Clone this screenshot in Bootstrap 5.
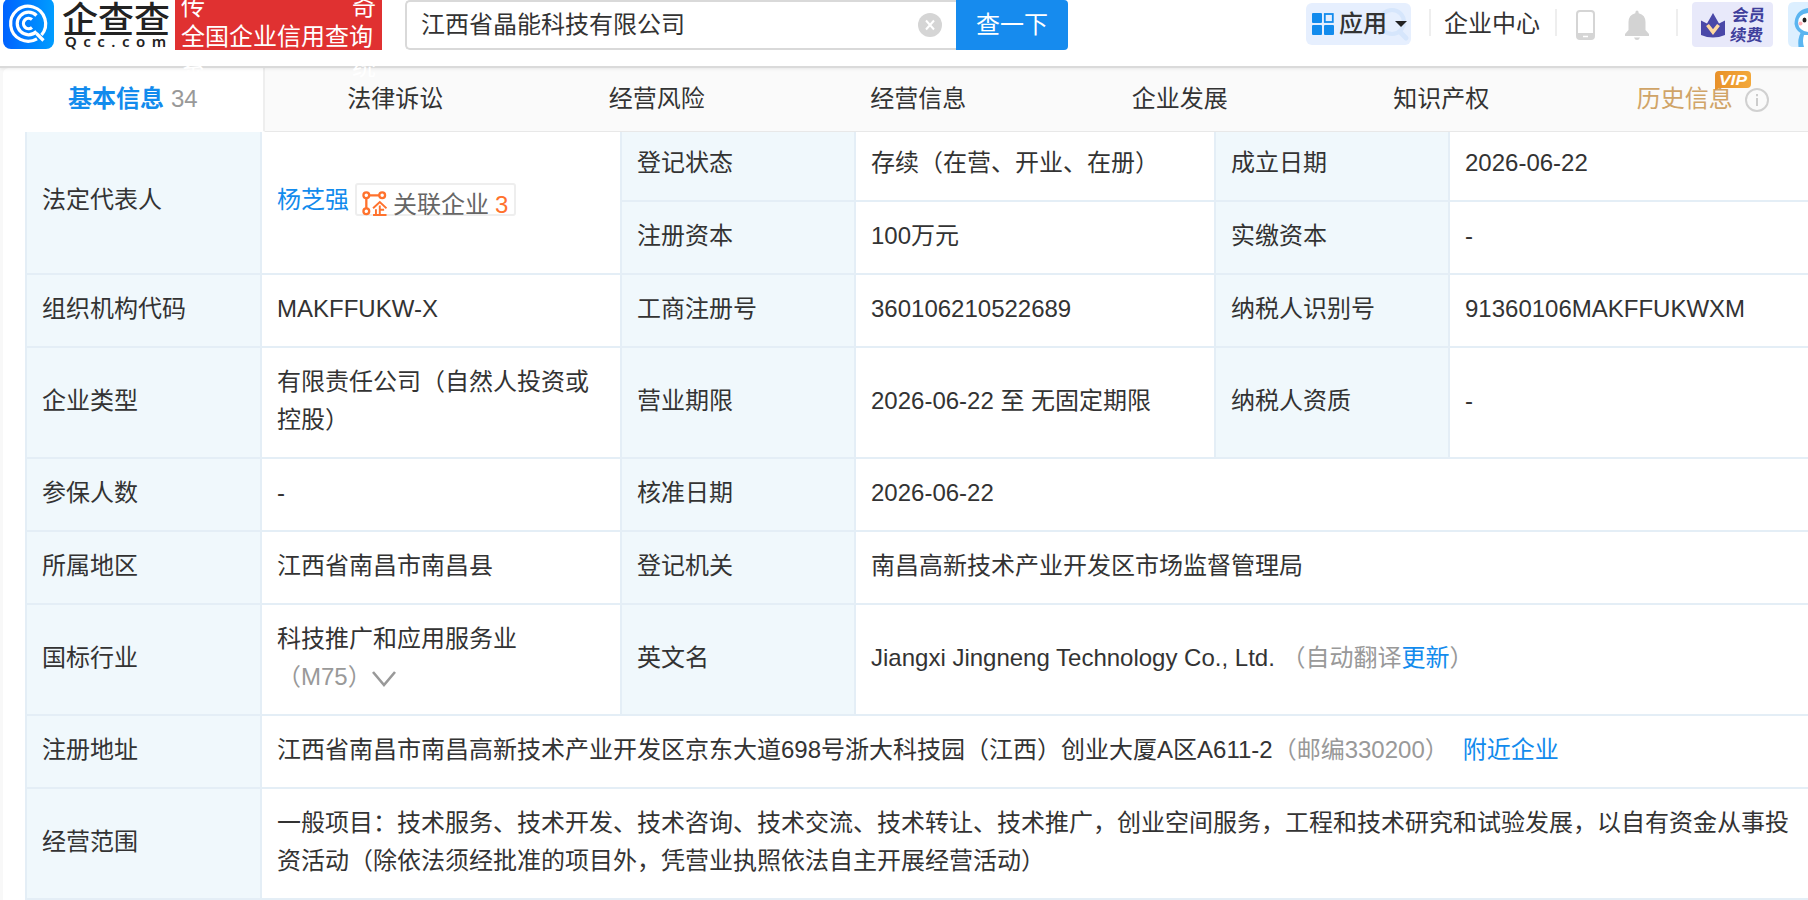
<!DOCTYPE html>
<html lang="zh-CN">
<head>
<meta charset="utf-8">
<meta name="viewport" content="width=device-width, initial-scale=1">
<title>企查查 - 江西省晶能科技有限公司</title>
<link href="https://cdn.jsdelivr.net/npm/bootstrap@5.3.0/dist/css/bootstrap.min.css" rel="stylesheet">
<style>
body{font-family:"Liberation Sans","Noto Sans CJK SC",sans-serif;font-size:24px;line-height:38px;color:#333;background:#f8f8f8;overflow:hidden;height:900px}
a{color:#128bed;text-decoration:none}
svg{display:block;flex:none}
.topbar{height:68px;border-bottom:2px solid #dadada;padding-left:3px;position:relative;z-index:3;box-shadow:0 1px 3px rgba(0,0,0,.08)}
.brand-name{width:106px;margin-left:8px}
.brand-cn{font-family:"Noto Sans CJK SC",sans-serif;font-weight:500;font-size:36px;line-height:34px;height:34px;color:#222;white-space:nowrap}
.brand-en{font-family:"Noto Sans",sans-serif;font-weight:600;font-size:15px;line-height:14px;letter-spacing:6.5px;color:#222;padding-left:3px;white-space:nowrap}
.slogan{width:207px;height:50px;margin-left:7px;padding:0 6px;background:#e03131;color:#fff;line-height:30px}
.slogan-in{margin-top:-8px}
.search{width:551px;height:50px;margin-left:23px;border:2px solid #d9d9d9;border-right:0;border-radius:5px 0 0 5px;padding:0 14px 0 14px}
.search-btn{width:112px;height:50px;background:#168bee;color:#fff;border-radius:0 4px 4px 0;font-size:24px;padding:0;line-height:48px;border:0}
.app-pill{width:105px;height:42px;margin:3px 0 0 238px;padding-left:6px;background:#e6effe;border-radius:6px;position:relative}
.app-pill b{font-weight:500;margin-left:5px;z-index:1}
.lens{position:absolute;right:1px;top:4px}
.caret{border:6px solid transparent;border-top-color:#222;border-bottom:0;margin-left:8px;z-index:1}
.rule{width:2px;height:27px;margin-top:9px;background:#eee}
.rule.first{margin-left:18px}
.rule.second{margin-left:15px}
.rule.third{margin-left:27px}
.center-link{margin:5px 0 0 13px}
.phone{margin:10px 0 0 19px}
.bell{margin:10px 0 0 30px}
.member{width:81px;height:45px;margin:2px 0 0 14px;padding:3px 0 0 9px;background:#e8e9fa;border-radius:4px}
.member b{font-size:16.5px;line-height:20px;color:#3f3f9c;margin-left:6px;transform:skewX(-6deg)}
.mascot{margin:2px 0 0 15px}
.tabs{height:64px;margin-left:3px;width:1831px;position:relative;z-index:2}
.tab-item{width:261.5px;height:64px;background:#fafafa;border-bottom:1px solid #e8e8e8;flex:none;padding-bottom:2px}
.tab-item.on{background:#fff;border-right:2px solid #eee;border-bottom-color:#fff;border-radius:6px 0 0 0}
.tab-item.on b{color:#128bed;font-weight:700}
.tab-item.on span{margin-left:7px}
.hist{color:#d0a467;position:relative}
.vip{position:absolute;left:78px;top:-9px}
.info-dot{margin-left:12px;margin-top:3px}
.panel{margin-left:3px;margin-top:-3px;padding-left:22px;background:#fff;width:1831px}
.info{width:1785px;table-layout:fixed;border-collapse:separate;border-spacing:0}
.info td,.info th{font-weight:400;border:solid #e4eef6;border-width:0 2px 2px 0;padding:0 15px 3px;height:73px;vertical-align:middle;text-align:left}
.info th{background:#f0f8fc}
.info tr>.edge{border-left-width:2px}
.info .tall>*{height:111px}
.c1,.c3,.c5{width:234px}
.c1{width:237px}
.c2{width:360px}
.grey{color:#999}
.tag-rel{height:33px;border:2px solid #eee;border-radius:3px;padding:0 6px 0 5px;margin-left:6px;color:#666;line-height:39px}
.tag-rel svg{margin-top:6px}
.tag-rel span{margin-left:6px}
.tag-rel i{font-style:normal;color:#ff722d;margin-left:6px}
.more{margin-left:-1px}
.near{margin-left:14px}
</style>
</head>
<body>
<header class="topbar bg-white d-flex align-items-start">
  <svg width="51" height="49" viewBox="0 0 51 49"><defs><linearGradient id="lg"><stop stop-color="#0062ff"/><stop offset="1" stop-color="#009dff"/></linearGradient></defs><rect y="-2" width="51" height="51" rx="8" fill="url(#lg)"/><g fill="none" stroke="#fff" stroke-width="3.2"><path d="M38.500 35A17.500 17.500 0 1 0 34 38.800M33.500 33.500L40.500 40.500"/><path d="M33.500 15.500A11.300 11.300 0 1 0 33.500 31.500"/><path d="M29 19.500A5.200 5.200 0 1 0 29 27.500"/></g></svg>
  <div class="brand-name"><div class="brand-cn">企查查</div><div class="brand-en">Qcc.com</div></div>
  <div class="slogan"><div class="slogan-in">
    <div class="d-flex justify-content-between"><span>传</span><span>奇</span></div>
    <div class="text-nowrap">全国企业信用查询</div>
    <div class="d-flex justify-content-between"><span>系</span><span>统</span></div>
  </div></div>
  <div class="search d-flex align-items-center justify-content-between bg-white"><span>江西省晶能科技有限公司</span>
    <svg width="24" height="24" viewBox="0 0 24 24"><circle cx="12" cy="12" r="12" fill="#d5d5d5"/><path d="M8 7.500l8 9M16 7.500l-8 9" stroke="#fff" stroke-width="2"/></svg></div>
  <button class="btn search-btn">查一下</button>
  <div class="app-pill d-flex align-items-center">
    <svg class="lens" width="34" height="36" viewBox="0 0 34 36" fill="none" stroke="#d6e6fc" stroke-width="4"><circle cx="16" cy="15" r="12"/><path d="M24 25l6 6" stroke-width="5" stroke-linecap="round"/></svg>
    <svg width="22" height="22" viewBox="0 0 22 22" fill="#128bed"><rect width="10" height="10" rx="1"/><rect x="12.800" y="1" width="8" height="8" fill="none" stroke="#128bed" stroke-width="1.800"/><rect y="12" width="10" height="10" rx="1"/><rect x="12" y="12" width="10" height="10" rx="1"/></svg>
    <b>应用</b><span class="caret"></span></div>
  <span class="rule first"></span>
  <span class="text-nowrap center-link">企业中心</span>
  <span class="rule second"></span>
  <svg class="phone" width="19" height="30" viewBox="0 0 19 30"><rect x="1" y="1" width="17" height="28" rx="3" fill="none" stroke="#d5d5d5" stroke-width="2"/><path d="M1 23h17v4q0 2-2 2H3q-2 0-2-2z" fill="#d5d5d5"/><path d="M7 26.500h5" stroke="#fff" stroke-width="1.500"/></svg>
  <svg class="bell" width="24" height="30" viewBox="0 0 24 30" fill="#d3d3d3"><path d="M10.500 2a1.500 1.500 0 0 1 3 0l.2 1.200Q20.500 5 20.500 12v8l3.500 4v2H0v-2l3.500-4v-8q0-7 6.800-8.800zM9 27.500h6q-1 2.500-3 2.500t-3-2.500z"/></svg>
  <span class="rule third"></span>
  <div class="member d-flex">
    <svg class="mt-2" width="24" height="25" viewBox="0 0 24 25"><path d="M0 7.500l6 3L12 0l6 10.500 6-3V22q-12 5-24 0z" fill="#4a48a8"/><path d="M6.500 12l5.500 7 5.500-7" fill="none" stroke="#ffd9a0" stroke-width="3.600"/></svg>
    <b>会员<br>续费</b></div>
  <svg class="mascot" width="20" height="45" viewBox="0 0 20 45"><path d="M6 0h14v45H6q-6 0-6-6V6q0-6 6-6z" fill="#dcefff"/><path d="M20 6Q7 8 6.500 22q1 6 6 9-3 6-2 14h9.500z" fill="#5bb5f0"/><path d="M20 11Q10 12 10 21q1 8 10 9z" fill="#fff"/><ellipse cx="16.500" cy="18" rx="2" ry="2.600" fill="#222"/><circle cx="12.500" cy="21.500" r="2" fill="#ffb0b8"/><path d="M16 33h4v12h-4q-2-6 0-12z" fill="#fff"/></svg>
</header>
<nav class="tabs d-flex">
  <div class="tab-item on d-flex align-items-center justify-content-center"><b>基本信息</b><span class="grey">34</span></div>
  <div class="tab-item d-flex align-items-center justify-content-center">法律诉讼</div>
  <div class="tab-item d-flex align-items-center justify-content-center">经营风险</div>
  <div class="tab-item d-flex align-items-center justify-content-center">经营信息</div>
  <div class="tab-item d-flex align-items-center justify-content-center">企业发展</div>
  <div class="tab-item d-flex align-items-center justify-content-center">知识产权</div>
  <div class="tab-item d-flex align-items-center justify-content-center"><div class="hist">历史信息
    <svg class="vip" width="36" height="19" viewBox="0 0 36 19"><defs><linearGradient id="vg"><stop stop-color="#e8912a"/><stop offset="1" stop-color="#f3a83a"/></linearGradient></defs><path d="M4 0h28q4 0 4 4v9q0 4-4 4H5l-5 2V4q0-4 4-4z" fill="url(#vg)"/><text x="4" y="13.500" textLength="28" lengthAdjust="spacingAndGlyphs" font-family="Liberation Sans" font-size="14" font-weight="700" font-style="italic" fill="#fff">VIP</text></svg></div>
    <svg class="info-dot" width="24" height="24" viewBox="0 0 24 24"><circle cx="12" cy="12" r="11" fill="none" stroke="#d0d0d0" stroke-width="2"/><path d="M12 10v8M12 6v2.200" stroke="#ccc" stroke-width="2"/></svg></div>
</nav>
<main class="panel">
<table class="info">
  <colgroup><col class="c1"><col class="c2"><col class="c3"><col class="c2"><col class="c5"><col class="c2"></colgroup>
  <tr><th class="edge" rowspan="2">法定代表人</th><td rowspan="2"><div class="d-flex align-items-center text-nowrap"><a href="#">杨芝强</a><div class="tag-rel d-flex"><svg width="25" height="25" viewBox="0 0 26 26" fill="none" stroke="#ff722d" stroke-width="2.400"><circle cx="4.500" cy="4.500" r="3"/><circle cx="21" cy="4.500" r="3"/><circle cx="4.500" cy="21" r="3"/><path d="M7.500 4.500H18M4.500 7.500V18"/><path stroke-width="2" d="M11.500 18l7-6.500 7 6.500M18.500 15v9.500M18.500 19.500h4.500M14.500 19v5M11.500 25h14"/></svg><span>关联企业</span><i>3</i></div></div></td>
    <th>登记状态</th><td>存续（在营、开业、在册）</td><th>成立日期</th><td>2026-06-22</td></tr>
  <tr><th>注册资本</th><td>100万元</td><th>实缴资本</th><td>-</td></tr>
  <tr><th class="edge">组织机构代码</th><td>MAKFFUKW-X</td><th>工商注册号</th><td>360106210522689</td><th>纳税人识别号</th><td>91360106MAKFFUKWXM</td></tr>
  <tr class="tall"><th class="edge">企业类型</th><td>有限责任公司（自然人投资或控股）</td><th>营业期限</th><td>2026-06-22 至 无固定期限</td><th>纳税人资质</th><td>-</td></tr>
  <tr><th class="edge">参保人数</th><td>-</td><th>核准日期</th><td colspan="3">2026-06-22</td></tr>
  <tr><th class="edge">所属地区</th><td>江西省南昌市南昌县</td><th>登记机关</th><td colspan="3">南昌高新技术产业开发区市场监督管理局</td></tr>
  <tr class="tall"><th class="edge">国标行业</th><td>科技推广和应用服务业<div class="grey d-flex align-items-center"><span>（M75）</span><svg class="more mt-1" width="26" height="18" viewBox="0 0 26 18" fill="none" stroke="#999" stroke-width="2.600"><path d="M2 2l11 13L24 2"/></svg></div></td><th>英文名</th><td colspan="3">Jiangxi Jingneng Technology Co., Ltd. <span class="grey">（自动翻译<a href="#">更新</a>）</span></td></tr>
  <tr><th class="edge">注册地址</th><td colspan="5">江西省南昌市南昌高新技术产业开发区京东大道698号浙大科技园（江西）创业大厦A区A611-2<span class="grey">（邮编330200）</span><a href="#" class="near">附近企业</a></td></tr>
  <tr class="tall"><th class="edge">经营范围</th><td colspan="5">一般项目：技术服务、技术开发、技术咨询、技术交流、技术转让、技术推广，创业空间服务，工程和技术研究和试验发展，以自有资金从事投资活动（除依法须经批准的项目外，凭营业执照依法自主开展经营活动）</td></tr>
</table>
</main>
<script src="https://cdn.jsdelivr.net/npm/bootstrap@5.3.0/dist/js/bootstrap.bundle.min.js"></script>
</body>
</html>
